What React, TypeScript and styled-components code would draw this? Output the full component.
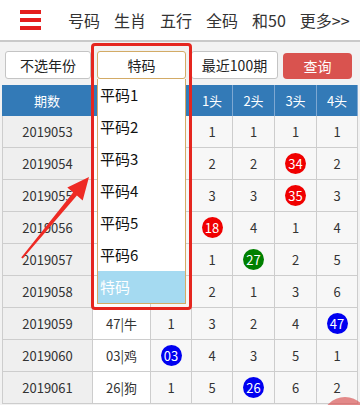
import React from 'react'
import styled, { createGlobalStyle } from 'styled-components'

const GlobalStyle = createGlobalStyle`
  html, body {
    margin: 0;
    padding: 0;
    background: #fff;
    font-family: "Noto Sans CJK SC", "Noto Sans", sans-serif;
  }
`

const Page = styled.div`
  position: relative;
  width: 360px;
  height: 405px;
  overflow: hidden;
  background: #f2f2f2;
`

const Header = styled.header`
  display: flex;
  align-items: center;
  height: 40px;
  background: #fff;
  border-bottom: 2px solid #c9c9c9;
`

const Burger = styled.div`
  display: flex;
  flex-direction: column;
  gap: 4px;
  width: 21px;
  margin: 0 27px 0 20px;

  span {
    display: block;
    height: 4px;
    background: #e41d1d;
  }
`

const Nav = styled.nav`
  display: flex;
  gap: 14px;
  font-size: 16px;
  color: #333;
  white-space: nowrap;
`

const FilterBar = styled.div`
  display: flex;
  align-items: center;
  gap: 5px;
  height: 43px;
  padding: 0 0 0 5px;
  box-sizing: border-box;
`

const FilterBox = styled.div<{ $w: number; $active?: boolean }>`
  display: flex;
  align-items: center;
  justify-content: center;
  width: ${p => p.$w}px;
  height: 28px;
  box-sizing: border-box;
  margin-top: 2px;
  margin-left: ${p => (p.$active ? 1 : 0)}px;
  background: #fff;
  border: 1px solid ${p => (p.$active ? '#d3ab66' : '#c4c4c4')};
  border-radius: 3px;
  font-size: 14px;
  color: #222;
`

const QueryButton = styled.button`
  width: 69px;
  height: 26px;
  margin: 4px 0 0 0;
  border: none;
  border-radius: 4px;
  background: #d9534f;
  color: #fff;
  font-family: inherit;
  font-size: 14px;
`

const Table = styled.div`
  display: grid;
  grid-template-columns: 91px 58px 41px 41px 42px 42px 41px;
  margin: 0 2px;
`

const HeadCell = styled.div`
  display: flex;
  align-items: center;
  justify-content: center;
  height: 31px;
  background: #337ab7;
  color: #fff;
  font-size: 13px;
  border-right: 1px solid #7ea8d2;
  &:last-child { border-right: none; }
`

const Cell = styled.div<{ $tone: 'issue' | 'code' | 'num' }>`
  display: flex;
  align-items: center;
  justify-content: center;
  height: 31px;
  font-size: 13px;
  color: #333;
  border-bottom: 1px solid #cdcdcd;
  border-right: 1px solid #cdcdcd;
  border-left: ${p => (p.$tone === 'issue' ? '1px solid #cdcdcd' : 'none')};
  background: ${p => (p.$tone === 'issue' ? '#efefef' : p.$tone === 'code' ? '#fff' : '#f7f7f7')};
`

const Ball = styled.span<{ $color: string }>`
  display: inline-flex;
  align-items: center;
  justify-content: center;
  width: 21px;
  height: 21px;
  border-radius: 50%;
  background: ${p => p.$color};
  color: #fff;
  font-size: 13px;
`

const Dropdown = styled.ul`
  position: absolute;
  left: 97px;
  top: 79px;
  width: 89px;
  margin: 0;
  padding: 0;
  list-style: none;
  background: #fff;
  border: 1px solid #d3ab66;
  border-top: none;
  box-sizing: border-box;
`

const Option = styled.li<{ $selected?: boolean }>`
  height: 32px;
  line-height: 32px;
  padding-left: 2px;
  font-size: 15px;
  color: ${p => (p.$selected ? '#fff' : '#111')};
  background: ${p => (p.$selected ? '#a5daf1' : 'transparent')};
`

const Highlight = styled.div`
  position: absolute;
  left: 91px;
  top: 43px;
  width: 101px;
  height: 267px;
  box-sizing: border-box;
  border: 3px solid #e5261f;
  border-radius: 4px;
`

const ArrowLayer = styled.svg`
  position: absolute;
  left: 0;
  top: 0;
  pointer-events: none;
`

const FloatBtn = styled.div`
  position: absolute;
  right: -8px;
  bottom: -38px;
  width: 46px;
  height: 46px;
  border-radius: 50%;
  background: rgba(218, 90, 90, 0.7);
`

type Val = number | { n: string; c: string } | null

const RED = '#f00000'
const BLUE = '#0000f0'
const GREEN = '#008000'

// rows 053-058: 特码 / 0头 sit under the open dropdown
const rows: { issue: string; code: string; heads: Val[] }[] = [
  { issue: '2019053', code: '', heads: [null, 1, 1, 1, 1] },
  { issue: '2019054', code: '', heads: [null, 2, 2, { n: '34', c: RED }, 2] },
  { issue: '2019055', code: '', heads: [null, 3, 3, { n: '35', c: RED }, 3] },
  { issue: '2019056', code: '', heads: [null, { n: '18', c: RED }, 4, 1, 4] },
  { issue: '2019057', code: '', heads: [null, 1, { n: '27', c: GREEN }, 2, 5] },
  { issue: '2019058', code: '', heads: [null, 2, 1, 3, 6] },
  { issue: '2019059', code: '47|牛', heads: [1, 3, 2, 4, { n: '47', c: BLUE }] },
  { issue: '2019060', code: '03|鸡', heads: [{ n: '03', c: BLUE }, 4, 3, 5, 1] },
  { issue: '2019061', code: '26|狗', heads: [1, 5, { n: '26', c: BLUE }, 6, 2] },
]

const heads = ['期数', '特码', '0头', '1头', '2头', '3头', '4头']
const options = ['平码1', '平码2', '平码3', '平码4', '平码5', '平码6', '特码']

export default function App() {
  return (
    <>
      <GlobalStyle />
      <Page>
        <Header>
          <Burger>
            <span />
            <span />
            <span />
          </Burger>
          <Nav>
            <span>号码</span>
            <span>生肖</span>
            <span>五行</span>
            <span>全码</span>
            <span>和50</span>
            <span>更多&gt;&gt;</span>
          </Nav>
        </Header>

        <FilterBar>
          <FilterBox $w={86}>不选年份</FilterBox>
          <FilterBox $w={89} $active>特码</FilterBox>
          <FilterBox $w={87}>最近100期</FilterBox>
          <QueryButton>查询</QueryButton>
        </FilterBar>

        <Table>
          {heads.map((h, i) => (
            <HeadCell key={h}>{i === 1 || i === 2 ? '' : h}</HeadCell>
          ))}
          {rows.map(r => (
            <React.Fragment key={r.issue}>
              <Cell $tone="issue">{r.issue}</Cell>
              <Cell $tone="code">{r.code}</Cell>
              {r.heads.map((v, i) => (
                <Cell $tone="num" key={i}>
                  {v === null ? null : typeof v === 'number' ? v : <Ball $color={v.c}>{v.n}</Ball>}
                </Cell>
              ))}
            </React.Fragment>
          ))}
        </Table>

        <Dropdown>
          {options.map((o, i) => (
            <Option key={o} $selected={i === options.length - 1}>
              {o}
            </Option>
          ))}
        </Dropdown>

        <Highlight />

        <ArrowLayer width="360" height="405" viewBox="0 0 360 405">
          <polygon
            points="21.2,257.4 73.1,192.4 67.3,187.6 89,177 82.7,200.4 76.9,195.6 22.8,258.6"
            fill="#ee2a24"
          />
        </ArrowLayer>

        <FloatBtn />
      </Page>
    </>
  )
}
